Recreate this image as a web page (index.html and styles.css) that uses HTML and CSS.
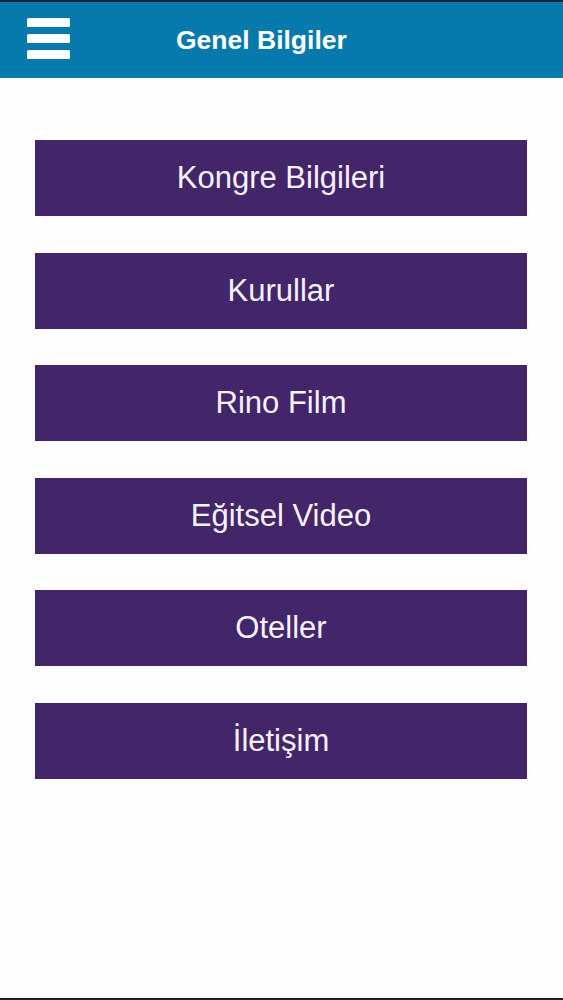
FILE: index.html
```html
<!DOCTYPE html>
<html lang="tr">
<head>
<meta charset="utf-8">
<title>Genel Bilgiler</title>
<link rel="stylesheet" href="styles.css">
</head>
<body>
<div class="app">
  <header class="topbar">
    <div class="hamburger" aria-label="Menü">
      <span></span><span></span><span></span>
    </div>
    <h1 class="title">Genel Bilgiler</h1>
  </header>
  <main class="menu">
    <a class="menu-btn" href="#">Kongre Bilgileri</a>
    <a class="menu-btn" href="#">Kurullar</a>
    <a class="menu-btn" href="#">Rino Film</a>
    <a class="menu-btn" href="#">Eğitsel Video</a>
    <a class="menu-btn" href="#">Oteller</a>
    <a class="menu-btn" href="#">İletişim</a>
  </main>
</div>
</body>
</html>
```

FILE: styles.css
```css
html, body {
  margin: 0;
  padding: 0;
}
body {
  background: #fdfdfd;
  font-family: "Liberation Sans", Arial, Helvetica, sans-serif;
}
.app {
  min-height: 100vh;
  box-sizing: border-box;
  display: flex;
  flex-direction: column;
  border-top: 2px solid #12283a;
  border-bottom: 2px solid #222228;
}
.topbar {
  height: 76px;
  background: #0679ad;
  display: flex;
  align-items: center;
}
.hamburger {
  margin-left: 27px;
  width: 43px;
  display: flex;
  flex-direction: column;
  gap: 7px;
  margin-top: -4px;
}
.hamburger span {
  display: block;
  height: 9px;
  background: #ffffff;
  border-radius: 1.5px;
}
.title {
  margin: 0 0 0 106px;
  color: #ffffff;
  font-size: 26.5px;
  font-weight: bold;
  line-height: 1;
}
.menu {
  flex: 1;
  padding: 62px 36px 0 35px;
  display: flex;
  flex-direction: column;
  gap: 36.6px;
}
.menu-btn {
  height: 76px;
  background: #43256a;
  color: #f6f2fb;
  text-decoration: none;
  font-size: 31px;
  display: flex;
  align-items: center;
  justify-content: center;
  box-sizing: border-box;
}
```
